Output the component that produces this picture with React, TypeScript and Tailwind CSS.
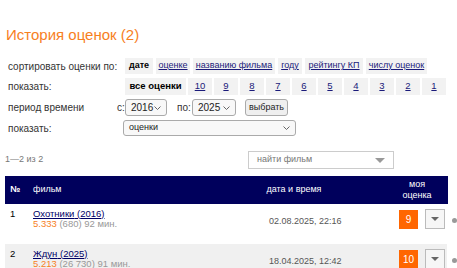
import React from 'react';

const sortLinks = [
  { t: 'оценке', w: 'w-[34px]' },
  { t: 'названию фильма', w: 'w-[82px]' },
  { t: 'году', w: 'w-[24px]' },
  { t: 'рейтингу КП', w: 'w-[58px]' },
  { t: 'числу оценок', w: 'w-[61px]' },
];
const marks = ['10', '9', '8', '7', '6', '5', '4', '3', '2', '1'];

const films = [
  { n: 1, title: 'Охотники', year: '2016', rating: '5.333', votes: '680', len: '92', date: '02.08.2025, 22:16', mine: '9' },
  { n: 2, title: 'Ждун', year: '2025', rating: '5.213', votes: '26 730', len: '91', date: '18.04.2025, 12:42', mine: '10' },
];

const Caret = () => (
  <svg width="7" height="4" viewBox="0 0 7 4" className="text-[#666]">
    <path d="M0.5 0.5 L3.5 3.5 L6.5 0.5" fill="none" stroke="currentColor" strokeWidth="1" />
  </svg>
);

const App: React.FC = () => {
  return (
    <div className="w-[457px] h-[268px] overflow-hidden bg-white font-['Liberation_Sans',Arial,sans-serif] text-[#333] whitespace-nowrap">
      <h1 className="pl-[6px] pt-[26px] h-[58px] text-[15px] leading-[18px] text-[#f7801e]">
        История оценок (2)
      </h1>

      <div className="flex flex-col gap-[4px] pl-[8px] text-[10px]">
        <div className="flex items-center h-[16px]">
          <span className="w-[117px]">сортировать оценки по:</span>
          <div className="flex gap-[3px] h-[16px] text-[9px]">
            <span className="w-[28px] flex items-center justify-center bg-[#f2f2f2] font-bold text-black">дате</span>
            {sortLinks.map((s) => (
              <a key={s.t} className={`${s.w} flex items-center justify-center bg-[#f2f2f2] underline text-[#1a1a7a]`}>
                {s.t}
              </a>
            ))}
          </div>
        </div>

        <div className="flex items-center h-[17px]">
          <span className="w-[117px]">показать:</span>
          <div className="flex gap-[2px] h-[17px] text-[9.5px]">
            <span className="w-[61px] flex items-center justify-center bg-[#f2f2f2] font-bold text-black">все оценки</span>
            {marks.map((m) => (
              <a key={m} className="w-[24px] flex items-center justify-center bg-[#f2f2f2] underline text-[#1a1a7a]">
                {m}
              </a>
            ))}
          </div>
        </div>

        <div className="flex items-center h-[17px]">
          <span className="w-[109px]">период времени</span>
          <span className="w-[8px]">с:</span>
          <span className="w-[42px] h-[17px] flex items-center justify-between px-[5px] border border-[#aaa] rounded-[3px] bg-[#f8f8f8] text-[#222]">
            2016 <Caret />
          </span>
          <span className="ml-[10px] w-[15px]">по:</span>
          <span className="w-[44px] h-[17px] flex items-center justify-between px-[5px] border border-[#aaa] rounded-[3px] bg-[#f8f8f8] text-[#222]">
            2025 <Caret />
          </span>
          <span className="ml-[9px] w-[43px] h-[17px] flex items-center justify-center border border-[#aaa] rounded-[3px] bg-[#efefef] text-[9px] text-[#222]">
            выбрать
          </span>
        </div>

        <div className="flex items-center h-[16px]">
          <span className="w-[115px]">показать:</span>
          <span className="w-[173px] h-[16px] flex items-center justify-between px-[5px] border border-[#aaa] rounded-[3px] bg-[#f8f8f8] text-[9px] text-[#222]">
            оценки <Caret />
          </span>
        </div>
      </div>

      <div className="flex items-center justify-between h-[18px] mt-[15px] pl-[5px] pr-[63px] text-[9px]">
        <span className="text-[#777]">1—2 из 2</span>
        <span className="w-[146px] h-[18px] flex items-center justify-between pl-[8px] pr-[8px] border border-[#ccc] text-[#777]">
          найти фильм
          <span className="w-0 h-0 border-l-[5px] border-r-[5px] border-t-[5px] border-l-transparent border-r-transparent border-t-[#999]" />
        </span>
      </div>

      <div className="mt-[7px] ml-[5px] text-[9.5px]">
        <div className="flex items-center w-[443px] h-[28px] bg-[#00005c] text-white text-[9px]">
          <span className="w-[28px] pl-[5px] font-bold">№</span>
          <span className="flex-1">фильм</span>
          <span className="w-[120px] text-center mr-[43px]">дата и время</span>
          <span className="w-[40px] text-center leading-[11px] mr-[11px]">моя<br />оценка</span>
        </div>

        {films.map((f, i) => (
          <div key={f.n} className="flex items-start">
            <div className={`flex items-start w-[443px] h-[40px] pt-[4px] ${i % 2 ? 'bg-[#f0f0f0]' : 'bg-white'}`}>
              <span className="w-[28px] pl-[5px] leading-[11px] text-black">{f.n}</span>
              <div className="flex-1 flex flex-col mt-[1px] leading-[10px]">
                <span>
                  <a className="underline text-[#000066]">{f.title} ({f.year})</a>
                </span>
                <span className="text-[#999]">
                  <span className="text-[#f7801e]">{f.rating}</span> ({f.votes}) {f.len} мин.
                </span>
              </div>
              <span className="w-[130px] mt-[8px] text-[9px] leading-[11px] text-[#555]">{f.date}</span>
              <div className="flex items-center gap-[7px] mt-[1px] mr-[2px]">
                <span className="w-[19px] h-[19px] flex items-center justify-center bg-[#ff6600] text-white text-[10px]">{f.mine}</span>
                <span className="w-[20px] h-[20px] flex items-center justify-center border border-[#bbb] bg-[#f6f6f6]">
                  <span className="w-0 h-0 border-l-[4px] border-r-[4px] border-t-[4px] border-l-transparent border-r-transparent border-t-[#666]" />
                </span>
              </div>
            </div>
            <span className="ml-[5px] mt-[14px] w-[5px] h-[5px] shrink-0 rounded-full bg-[#999]" />
          </div>
        ))}
      </div>
    </div>
  );
};

export default App;
